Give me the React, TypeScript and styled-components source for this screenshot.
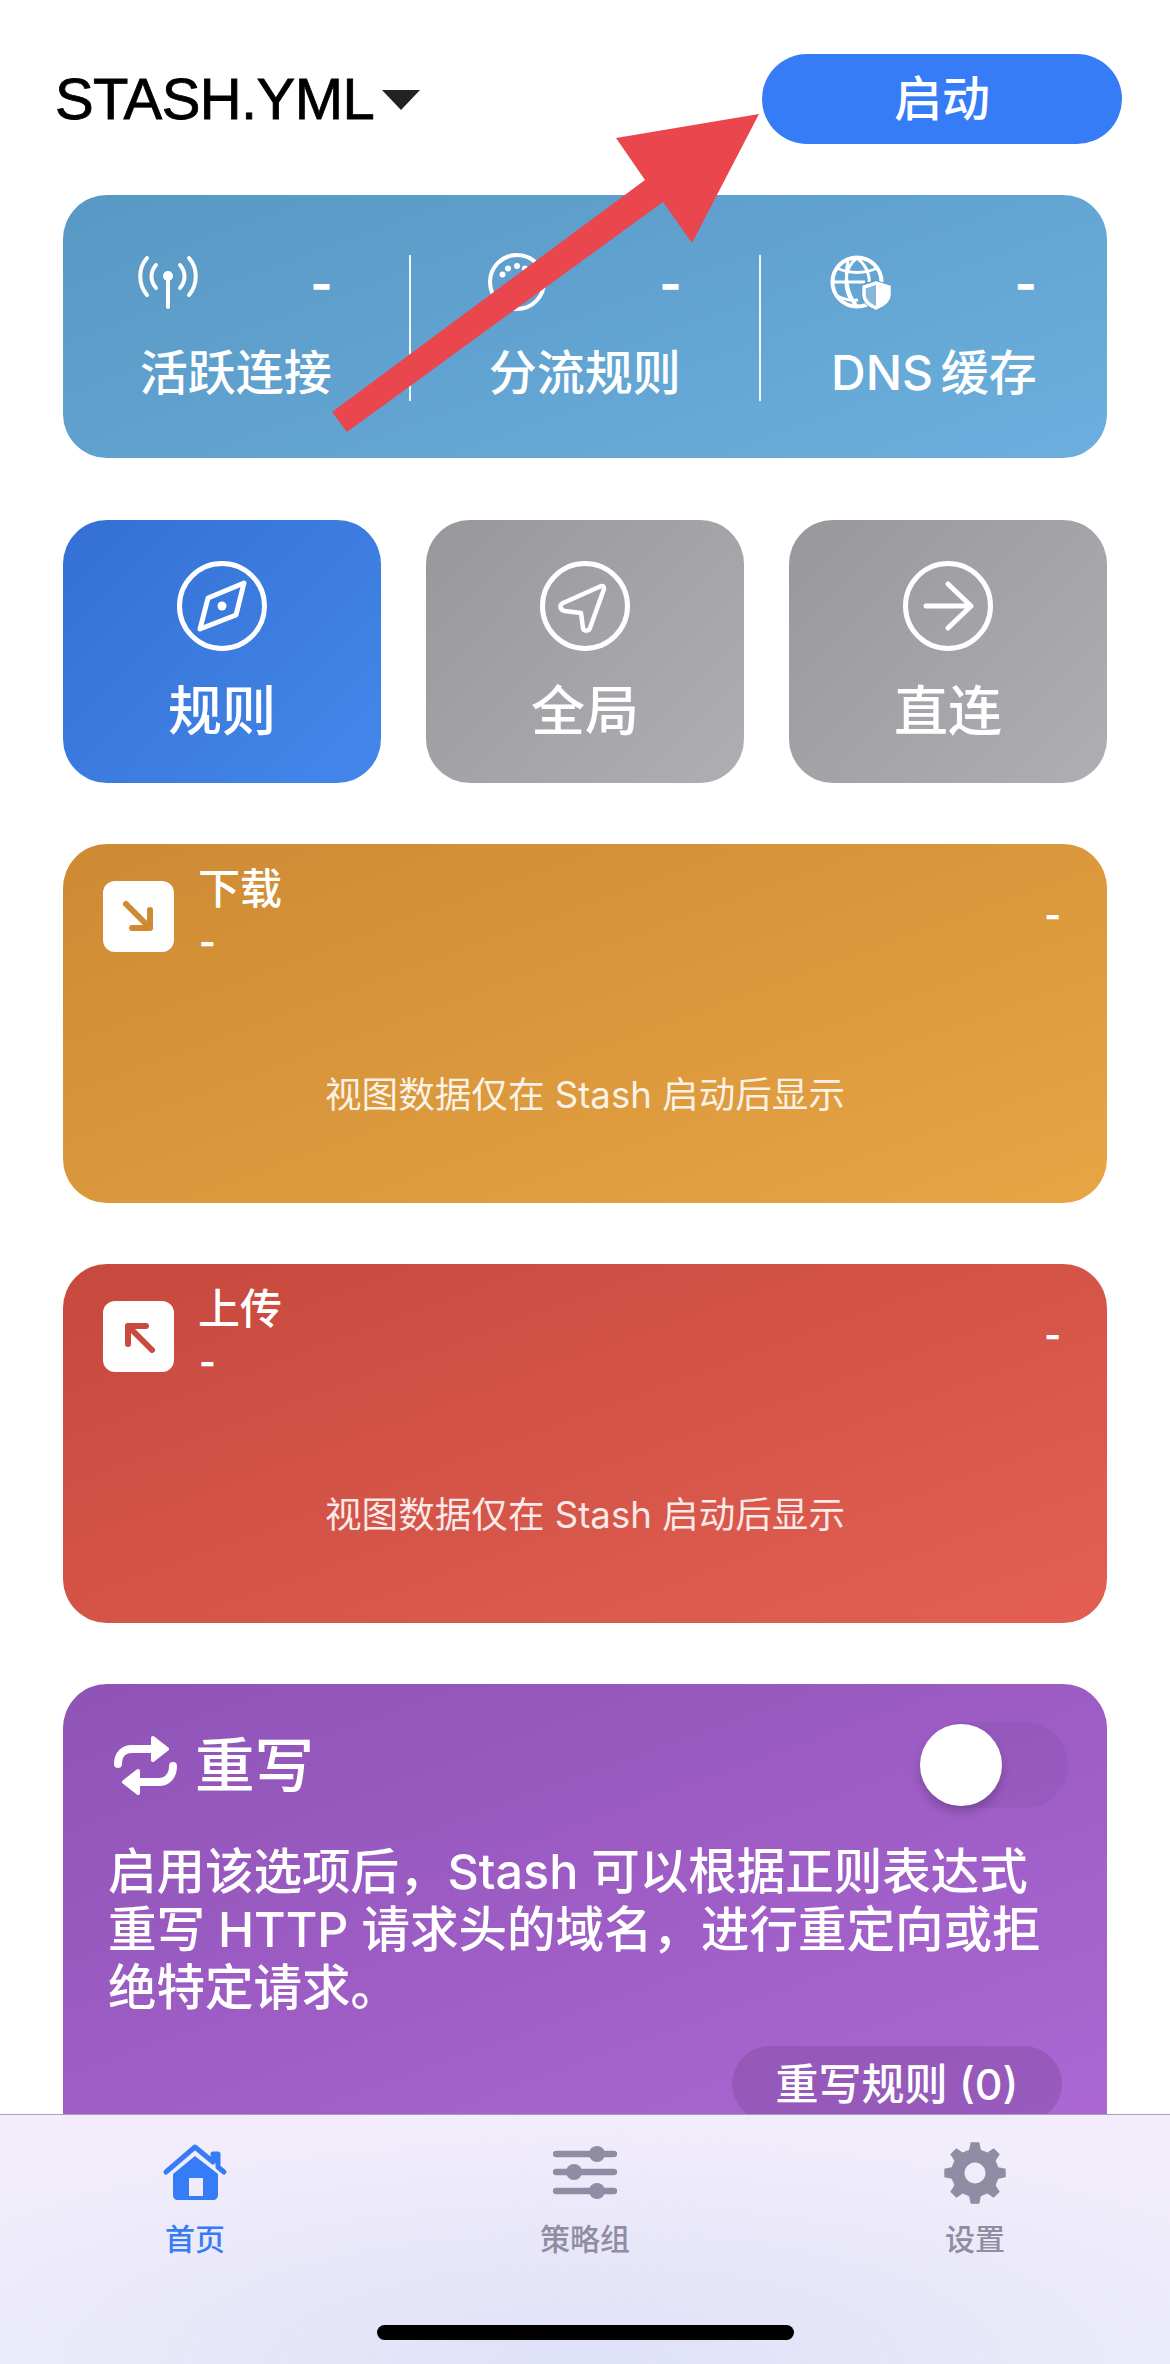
import React from "react";
import styled, { createGlobalStyle } from "styled-components";

const Global = createGlobalStyle`
  html, body { margin: 0; padding: 0; background: #fff; }
  body { font-family: Inter, "Noto Sans CJK SC", sans-serif; }
  * { box-sizing: border-box; }
`;

const Screen = styled.div`
  position: relative; width: 1170px; height: 2364px; display: flex; flex-direction: column;
  overflow: hidden; background: #fff;
`;
const Scroll = styled.main`flex: 1; min-height: 0; overflow: hidden;`;
const Header = styled.header`
  display: flex; justify-content: space-between; align-items: center;
  padding: 54px 48px 0 55px; margin-bottom: 51px;
`;
const ConfigPicker = styled.div`display: flex; align-items: center; gap: 8px;`;
const ConfigName = styled.span`
  font-size: 58px; line-height: 90px; color: #000; letter-spacing: -0.6px;
  font-family: "Liberation Sans", Inter, sans-serif; -webkit-text-stroke: 0.8px #000;
`;
const Caret = styled.span`
  width: 0; height: 0; border-left: 19px solid transparent; border-right: 19px solid transparent;
  border-top: 20px solid #222; margin-top: 2px;
`;
const StartButton = styled.button`
  width: 360px; height: 90px; border: 0; border-radius: 45px; background: #377cf7; color: #fff;
  font: 500 48px/90px Inter, "Noto Sans CJK SC", sans-serif; padding: 0;
`;
const Stack = styled.div`display: flex; flex-direction: column; gap: 61.5px; padding: 0 63px;`;
const StatsCard = styled.section`
  height: 263px; border-radius: 44px; padding: 60px 0; display: grid; grid-template-columns: 345.5px 350.5px 348px;
  background: linear-gradient(160deg, #5798c4, #6caedd); color: #fff;
`;
const StatCell = styled.div<{ $divider?: boolean }>`
  display: flex; justify-content: center; border-left: ${p => (p.$divider ? "2px solid rgba(255,255,255,.9)" : "0")};
`;
const StatInner = styled.div<{ $wide?: boolean }>`width: ${p => (p.$wide ? 216 : 204)}px; display: flex; flex-direction: column;`;
const StatTop = styled.div`height: 90px; display: flex; justify-content: space-between; align-items: flex-start;`;
const StatDash = styled.span`font: 700 48px/58px Inter, sans-serif; margin: 0 5px 0 0;`;
const StatLabel = styled.div`
  font: 500 48px/56px Inter, "Noto Sans CJK SC", sans-serif; text-align: center; white-space: nowrap; word-spacing: -5px;
`;
const ModeRow = styled.div`display: grid; grid-template-columns: repeat(3, 318px); justify-content: space-between;`;
const ModeCard = styled.div<{ $active?: boolean }>`
  height: 263px; border-radius: 44px; color: #fff; display: flex; flex-direction: column; align-items: center;
  padding-top: 41px;
  background: ${p => (p.$active ? "linear-gradient(135deg, #3470d4, #4487ea)" : "linear-gradient(135deg, #98989c, #aeaeb3)")};
`;
const ModeLabel = styled.div`font: 500 54px/60px Inter, "Noto Sans CJK SC", sans-serif; margin-top: 31px;`;
const TrafficCard = styled.section<{ $from: string; $to: string }>`
  height: 358.5px; border-radius: 44px; color: #fff; display: flex; flex-direction: column;
  padding: 22px 46px 0 40px;
  background: linear-gradient(160deg, ${p => p.$from}, ${p => p.$to});
`;
const TrafficHead = styled.div`display: flex; align-items: flex-start;`;
const TrafficIcon = styled.div`
  width: 71px; height: 71px; border-radius: 12px; background: #fff; margin: 15px 24px 0 0;
  display: flex; align-items: center; justify-content: center;
`;
const TrafficTitles = styled.div`flex: 1; display: flex; flex-direction: column;`;
const TrafficTitle = styled.div`font: 500 42px/46px Inter, "Noto Sans CJK SC", sans-serif;`;
const TrafficDash = styled.div`font: 700 36px/36px Inter, sans-serif; margin: 12px 0 0 1px;`;
const TrafficRight = styled.div`font: 700 36px/36px Inter, sans-serif; margin-top: 31px;`;
const TrafficHint = styled.div`
  font: 400 36.600px/44px Inter, "Noto Sans CJK SC", sans-serif; color: rgba(255,255,255,.88); text-align: center;
  margin: 113px -6px 0 0;
`;
const RewriteCard = styled.section`
  min-height: 560px; border-radius: 44px 44px 0 0; padding: 38px 39px 0 45px; color: #fff;
  background: linear-gradient(160deg, #8f53b6, #b06ad8);
`;
const RewriteHead = styled.div`display: flex; align-items: center; justify-content: space-between; margin-left: 2px;`;
const RewriteTitle = styled.div`display: flex; align-items: center; gap: 15px; font: 500 59.500px/86px Inter, "Noto Sans CJK SC", sans-serif;`;
const Toggle = styled.div`
  width: 148px; height: 86px; border-radius: 43px; background: rgba(60,40,80,.07); padding: 2px 0;
  display: flex; align-items: center;
`;
const Knob = styled.div`width: 82px; height: 82px; border-radius: 50%; background: #fff; box-shadow: 0 6px 10px rgba(0,0,0,.2);`;
const RewriteText = styled.p`margin: 35px 0 0; font: 500 48.500px/58px Inter, "Noto Sans CJK SC", sans-serif; white-space: nowrap;`;
const RuleRow = styled.div`display: flex; justify-content: flex-end; margin-top: 29px; margin-right: 6px;`;
const RuleButton = styled.div`
  width: 330px; height: 76px; border-radius: 38px; background: rgba(60,40,80,.16); text-align: center;
  font: 500 43px/76px Inter, "Noto Sans CJK SC", sans-serif;
`;
const TabBar = styled.nav`
  flex: none; height: 250px; border-top: 1px solid rgba(70,50,90,.4); display: flex; flex-direction: column;
  background: radial-gradient(ellipse 800px 250px at 50% 100%, #dfe1f8, rgba(223,225,248,0)), linear-gradient(180deg, #f3edfb, #efeefa);
`;
const Tabs = styled.div`display: grid; grid-template-columns: repeat(3, 1fr);`;
const Tab = styled.div<{ $active?: boolean }>`
  display: flex; flex-direction: column; align-items: center; padding-top: 24px; color: ${p => (p.$active ? "#377cf7" : "#8f8ca3")};
`;
const TabIcon = styled.div`height: 68px; display: flex; align-items: center; justify-content: center;`;
const TabLabel = styled.div`font: 500 30px/36px Inter, "Noto Sans CJK SC", sans-serif; margin-top: 14px;`;
const HomeBar = styled.div`width: 417px; height: 15px; border-radius: 8px; background: #000; align-self: center; margin-top: auto; margin-bottom: 24px;`;
const Annotation = styled.svg`position: absolute; left: 0; top: 0; width: 1170px; height: 500px; pointer-events: none;`;

const Antenna = () => (
  <svg width="60" height="55" viewBox="0 0 60 55" fill="none" stroke="#fff" strokeLinecap="round" strokeWidth="4" style={{ marginLeft: 4 }}>
    <path d="M9 3C0 13 0 29 9 40M51 3c9 10 9 26 0 37M18 10c-6 7-6 16 0 23M42 10c6 7 6 16 0 23M30 21v31" />
    <circle cx="30" cy="21" r="5" fill="#fff" stroke="none" />
  </svg>
);
const Gauge = () => (
  <svg width="60" height="60" viewBox="0 0 60 60" fill="none" stroke="#fff" strokeWidth="4" style={{ marginTop: -3, marginLeft: 4 }}>
    <circle cx="30" cy="30" r="27" />
    <g fill="#fff" stroke="none">
      <circle cx="15.500" cy="22.500" r="3" /><circle cx="21" cy="16.500" r="3" /><circle cx="30" cy="14" r="3" /><circle cx="38" cy="16.500" r="3" /><circle cx="44" cy="22" r="3" />
    </g>
    <path d="M30 30l8-8" />
  </svg>
);
const GlobeShield = () => (
  <svg width="62" height="56" viewBox="0 0 62 56" fill="none" stroke="#fff" strokeWidth="3" style={{ marginLeft: 4 }}>
    <circle cx="27" cy="27" r="24.500" strokeWidth="4" />
    <path d="M27 3C14 12 11 38 27 51M27 3c12 9 15 24 10 34M7 13c12 6 28 6 40 0M3 27h32M7 41c8 4 14 5 21 4M18 6c-3 14-2 32 9 45" strokeWidth="3" />
    <path d="M45 26l16 4.500v10c0 7-7 12-16 15-8-3-14-8-14-15v-10z" fill="#5e9fcf" stroke="none" transform="translate(0 -1)" />
    <path d="M46 28l13 4v8c0 6-6 10-13 13-7-3-12-7-12-13v-8z" fill="#fff" fillOpacity=".25" stroke="#fff" strokeWidth="3.500" />
    <path d="M46 29v23c7-3 13-7 13-13v-7z" fill="#fff" stroke="none" />
  </svg>
);
const CircleBase: React.FC<{ children: React.ReactNode }> = ({ children }) => (
  <svg width="90" height="90" viewBox="0 0 90 90" fill="none" stroke="#fff" strokeWidth="5" strokeLinecap="round" strokeLinejoin="round">
    <circle cx="45" cy="45" r="42.500" />
    {children}
  </svg>
);
const Compass = () => (
  <CircleBase>
    <path d="M67 22L59 54 23 68 31 37z" />
    <circle cx="45" cy="45" r="4.500" fill="#fff" stroke="none" />
  </CircleBase>
);
const Nav = () => (
  <CircleBase>
    <path d="M62 25C63 25 64 26 64 28L50 67C49 70 44 71 43 67L41 52 25 50C20 49 19 44 23 42L59 26C60 25.500 61 25 62 25Z" strokeWidth="4.500" />
  </CircleBase>
);
const ArrowR = () => (
  <CircleBase>
    <path d="M23 45H68M45 23L68 45 45 67" />
  </CircleBase>
);
const Diag: React.FC<{ up?: boolean; color: string }> = ({ up, color }) => (
  <svg width="36" height="36" viewBox="0 0 36 36" fill="none" stroke={color} strokeWidth="6" strokeLinecap="round" strokeLinejoin="round">
    {up ? <path d="M31 31L7 7M7 25V7H25" /> : <path d="M5 5L29 29M29 11V29H11" />}
  </svg>
);
const Repeat = () => (
  <svg width="70" height="65" viewBox="0 0 70 65" fill="none" stroke="#fff" strokeWidth="8" strokeLinecap="round">
    <path d="M8 31C8 21 14 16 22 16H45M63 33C63 43 57 49 49 49H26" />
    <path d="M43 5L57 16 43 27zM28 38L14 49 28 60z" fill="#fff" strokeWidth="4" strokeLinejoin="round" />
  </svg>
);
const Home = () => (
  <svg width="68" height="62" viewBox="0 0 68 62" fill="#377cf7">
    <path d="M5 30L34 5 52 20V12H57V25L63 30" fill="none" stroke="#377cf7" strokeWidth="5" strokeLinecap="round" strokeLinejoin="round" />
    <path fillRule="evenodd" d="M12 32L34 14 57 32V53C57 56 55 58 52 58H17C14 58 12 56 12 53ZM28 36V54H42V36Z" />
  </svg>
);
const Sliders = () => (
  <svg width="64" height="56" viewBox="0 0 64 56" fill="#8f8ca3" stroke="#8f8ca3" strokeLinecap="round">
    <path d="M3 9H61M3 27H61M3 46H61" strokeWidth="6.500" fill="none" />
    <circle cx="44" cy="9" r="8" stroke="none" /><circle cx="21" cy="27" r="8" stroke="none" /><circle cx="44" cy="46" r="8" stroke="none" />
  </svg>
);
const gearPath = (() => {
  const pt = (r: number, deg: number) => {
    const a = ((deg - 90) * Math.PI) / 180;
    return `${(32 + r * Math.cos(a)).toFixed(2)} ${(32 + r * Math.sin(a)).toFixed(2)}`;
  };
  let d = "";
  for (let i = 0; i < 8; i++) {
    const c = i * 45;
    d += `${i ? "L" : "M"}${pt(24, c - 14)}L${pt(31, c - 8)}L${pt(31, c + 8)}L${pt(24, c + 14)}`;
  }
  return `${d}ZM32 21.500a10.500 10.500 0 1 0 0.01 0Z`;
})();
const Gear = () => (
  <svg width="64" height="64" viewBox="0 0 64 64">
    <path d={gearPath} fill="#8f8ca3" fillRule="evenodd" />
  </svg>
);

export default function App() {
  return (
    <Screen>
      <Global />
      <Scroll>
        <Header>
          <ConfigPicker><ConfigName>STASH.YML</ConfigName><Caret /></ConfigPicker>
          <StartButton>启动</StartButton>
        </Header>
        <Stack>
          <StatsCard>
            <StatCell><StatInner><StatTop><Antenna /><StatDash>-</StatDash></StatTop><StatLabel>活跃连接</StatLabel></StatInner></StatCell>
            <StatCell $divider><StatInner><StatTop><Gauge /><StatDash>-</StatDash></StatTop><StatLabel>分流规则</StatLabel></StatInner></StatCell>
            <StatCell $divider><StatInner $wide><StatTop><GlobeShield /><StatDash>-</StatDash></StatTop><StatLabel>DNS 缓存</StatLabel></StatInner></StatCell>
          </StatsCard>
          <ModeRow>
            <ModeCard $active><Compass /><ModeLabel>规则</ModeLabel></ModeCard>
            <ModeCard><Nav /><ModeLabel>全局</ModeLabel></ModeCard>
            <ModeCard><ArrowR /><ModeLabel>直连</ModeLabel></ModeCard>
          </ModeRow>
          <TrafficCard $from="#cd8a33" $to="#e7a544">
            <TrafficHead>
              <TrafficIcon><Diag color="#cf8b33" /></TrafficIcon>
              <TrafficTitles><TrafficTitle>下载</TrafficTitle><TrafficDash>-</TrafficDash></TrafficTitles>
              <TrafficRight>-</TrafficRight>
            </TrafficHead>
            <TrafficHint>视图数据仅在 Stash 启动后显示</TrafficHint>
          </TrafficCard>
          <TrafficCard $from="#c6493d" $to="#e35f53">
            <TrafficHead>
              <TrafficIcon><Diag up color="#c84b3f" /></TrafficIcon>
              <TrafficTitles><TrafficTitle>上传</TrafficTitle><TrafficDash>-</TrafficDash></TrafficTitles>
              <TrafficRight>-</TrafficRight>
            </TrafficHead>
            <TrafficHint>视图数据仅在 Stash 启动后显示</TrafficHint>
          </TrafficCard>
          <RewriteCard>
            <RewriteHead>
              <RewriteTitle><Repeat />重写</RewriteTitle>
              <Toggle><Knob /></Toggle>
            </RewriteHead>
            <RewriteText>
              启用该选项后，Stash 可以根据正则表达式<br />
              重写 HTTP 请求头的域名，进行重定向或拒<br />
              绝特定请求。
            </RewriteText>
            <RuleRow><RuleButton>重写规则 (0)</RuleButton></RuleRow>
          </RewriteCard>
        </Stack>
      </Scroll>
      <TabBar>
        <Tabs>
          <Tab $active><TabIcon><Home /></TabIcon><TabLabel>首页</TabLabel></Tab>
          <Tab><TabIcon><Sliders /></TabIcon><TabLabel>策略组</TabLabel></Tab>
          <Tab><TabIcon><Gear /></TabIcon><TabLabel>设置</TabLabel></Tab>
        </Tabs>
        <HomeBar />
      </TabBar>
      <Annotation viewBox="0 0 1170 500">
        <polygon points="759,114 616,138 645,180 332,412 347,432 663,202 692,243" fill="#e9464d" />
      </Annotation>
    </Screen>
  );
}
